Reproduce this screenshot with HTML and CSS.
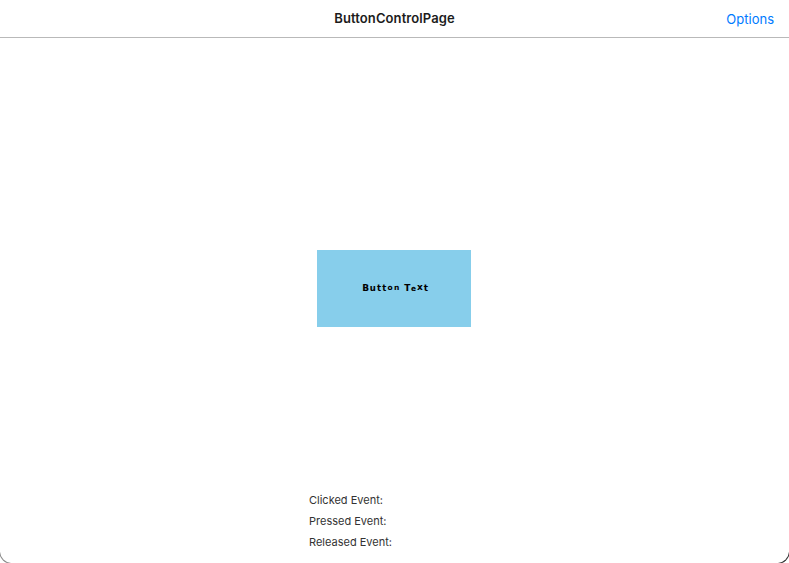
FILE: index.html
```html
<!DOCTYPE html>
<html lang="en">
<head>
<meta charset="utf-8">
<title>ButtonControlPage</title>
<link rel="stylesheet" href="styles.css">
</head>
<body>
<div class="window">
  <header class="navbar">
    <span></span>
    <h1 class="title">ButtonControlPage</h1>
    <a class="options">Options</a>
  </header>
  <main class="content">
    <button class="sample"><span class="label">B<span class="round">utt</span><span class="small">on</span> T<span class="low">e</span><span class="high">x</span>t</span></button>
  </main>
  <footer class="events">
    <div>Clicked Event:</div>
    <div>Pressed Event:</div>
    <div>Released Event:</div>
  </footer>
</div>
</body>
</html>
```
FILE: styles.css
```css
* { box-sizing: border-box; }
body { margin: 0; background: #fff; font-family: Inter, sans-serif; }
.window {
  position: relative;
  height: 563px;
  display: flex;
  flex-direction: column;
  background: #fff;
  overflow: hidden;
}
.window::before,
.window::after {
  content: "";
  position: absolute;
  bottom: 0;
  width: 12px;
  height: 12px;
}
.window::before {
  left: 0;
  border-radius: 0 0 0 12px;
  box-shadow: 0 0 0 1px #8a8a8a;
  clip-path: inset(1px 1px 0 0);
}
.window::after {
  right: 0;
  border-radius: 0 0 12px 0;
  box-shadow: 0 0 0 1px #333;
  clip-path: inset(1px 0 0 1px);
}
.navbar {
  height: 38px;
  flex: none;
  display: grid;
  grid-template-columns: 1fr auto 1fr;
  align-items: center;
  padding: 0 15px;
  border-bottom: 1px solid #b9b9b9;
}
.title { margin: -2px 0 0; font-size: 13px; font-weight: 600; letter-spacing: 0.1px; color: #1c1c1c; }
.options { justify-self: end; font-size: 13px; color: #007aff; }
.content {
  flex: none;
  display: flex;
  justify-content: center;
  padding-top: 212px;
  height: 452px;
}
.sample {
  width: 154px;
  height: 77px;
  margin-right: 1px;
  padding: 0;
  border: 0;
  background: #87ceeb;
  color: #000;
  font: 700 9px/12px "DejaVu Sans", sans-serif;
}
.label { display: inline-block; padding-left: 3px; letter-spacing: 0.6px; }
.round { font-size: 8.5px; letter-spacing: 1.2px; }
.small { font-size: 7.5px; letter-spacing: 1.2px; position: relative; top: -1px; }
.low { font-size: 7.5px; letter-spacing: 0.9px; }
.high { letter-spacing: 0.9px; position: relative; top: -1px; }
.events { padding-left: 309px; font-size: 11px; line-height: 21px; color: #333; }
```
